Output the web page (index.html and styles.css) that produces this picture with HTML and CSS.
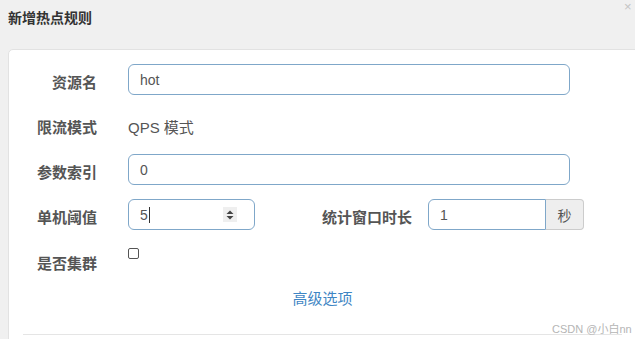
FILE: index.html
```html
<!DOCTYPE html>
<html lang="zh-CN">

<head>
    <meta charset="UTF-8">
    <meta name="viewport" content="width=device-width, initial-scale=1.0">
    <title>新增热点规则</title>
    <link rel="stylesheet" href="styles.css">
</head>

<body>
    <div class="modal-header">
        <h3 class="modal-title">新增热点规则</h3>
        <span class="close">×</span>
    </div>

    <div class="modal-body">
        <div class="form">
            <div class="form-row">
                <label class="form-label">资源名</label>
                <div class="field field-wide">hot</div>
            </div>
            <div class="form-row">
                <label class="form-label">限流模式</label>
                <span class="static-text">QPS 模式</span>
            </div>
            <div class="form-row">
                <label class="form-label">参数索引</label>
                <div class="field field-wide">0</div>
            </div>
            <div class="form-row">
                <label class="form-label">单机阈值</label>
                <div class="field field-number">
                    <span>5</span><span class="caret"></span>
                    <span class="spinner">
                        <svg width="8" height="12" viewBox="0 0 8 12">
                            <path d="M0.5 5 L4 1.5 L7.5 5 Z" fill="#444" />
                            <path d="M0.5 7 L4 10.5 L7.5 7 Z" fill="#444" />
                        </svg>
                    </span>
                </div>
                <label class="form-label label-inline">统计窗口时长</label>
                <div class="input-group">
                    <div class="field field-group">1</div>
                    <span class="addon">秒</span>
                </div>
            </div>
            <div class="form-row row-check">
                <label class="form-label">是否集群</label>
                <span class="checkbox"></span>
            </div>
        </div>

        <div class="advanced">
            <a class="link">高级选项</a>
        </div>

        <div class="divider"></div>
        <span class="watermark">CSDN @小白nn</span>
    </div>
</body>

</html>
```

FILE: styles.css
```css
html,
body {
    margin: 0;
    height: 339px;
    overflow: hidden;
}

body {
    background-color: #f0f0f0;
    font-family: "Liberation Sans", "Noto Sans CJK SC", sans-serif;
    color: #555;
    position: relative;
}

.modal-header {
    height: 49px;
    padding-left: 8px;
    display: flex;
    align-items: flex-start;
}

.modal-title {
    margin: 9px 0 0;
    font-size: 14px;
    font-weight: 700;
    color: #333;
    line-height: 18px;
}

.close {
    position: absolute;
    top: 0;
    left: 624px;
    font-size: 13px;
    line-height: 14px;
    color: #c4c4c4;
}

.modal-body {
    position: relative;
    margin-left: 8px;
    width: 629px;
    height: 300px;
    background: #fff;
    border: 1px solid #e2e2e2;
    border-radius: 5px 0 0 0;
    box-sizing: border-box;
}

.form {
    padding-top: 14px;
}

.form-row {
    display: flex;
    align-items: center;
    height: 31px;
    margin-bottom: 14px;
}

.form-label {
    width: 88px;
    margin-right: 31px;
    text-align: right;
    font-size: 15px;
    font-weight: 700;
    color: #555;
    padding-top: 3px;
}

.label-inline {
    width: 157px;
    margin-right: 16px;
}

.field {
    height: 31px;
    box-sizing: border-box;
    border: 1px solid #7fa7c9;
    border-radius: 6px;
    padding: 0 11px;
    font-size: 14px;
    color: #555;
    display: flex;
    align-items: center;
    background: #fff;
}

.field-wide {
    width: 442px;
}

.field-number {
    width: 127px;
}

.caret {
    width: 1px;
    height: 16px;
    background: #333;
    margin-left: 1px;
}

.spinner {
    margin-left: auto;
    margin-right: 6px;
    width: 14px;
    height: 15px;
    background: #efefef;
    display: flex;
    align-items: center;
    justify-content: center;
}

.input-group {
    display: flex;
}

.field-group {
    width: 118px;
    border-radius: 6px 0 0 6px;
}

.addon {
    width: 38px;
    height: 31px;
    box-sizing: border-box;
    border: 1px solid #ccc;
    border-left: none;
    border-radius: 0 4px 4px 0;
    background: #eee;
    font-size: 14px;
    color: #555;
    display: flex;
    align-items: center;
    justify-content: center;
}

.static-text {
    font-size: 15px;
    color: #555;
    padding-top: 3px;
}

.row-check {
    align-items: flex-start;
}

.row-check .form-label {
    padding-top: 8px;
}

.checkbox {
    width: 11px;
    height: 11px;
    box-sizing: border-box;
    border: 1px solid #555;
    border-radius: 2px;
    margin-top: 4px;
}

.advanced {
    text-align: center;
    line-height: 20px;
    margin-top: 0;
}

.link {
    font-size: 15px;
    color: #3f86c4;
}

.divider {
    margin: 25px 14px 0;
    height: 1px;
    background: #e5e5e5;
}

.watermark {
    position: absolute;
    left: 543px;
    top: 270px;
    font-size: 11px;
    color: #b5b5b5;
}
```
